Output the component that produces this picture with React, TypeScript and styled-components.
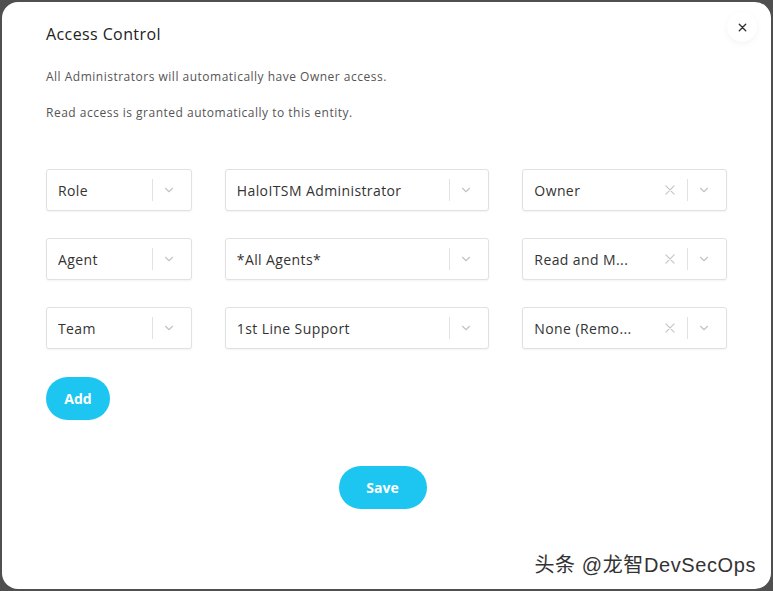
import * as React from "react";
import styled, { createGlobalStyle } from "styled-components";

const GlobalStyle = createGlobalStyle`
  html, body {
    margin: 0;
    padding: 0;
    background: #4f4f4f;
  }
  body {
    font-family: "Open Sans", "Noto Sans", sans-serif;
  }
`;

/* A row of the permission grid: entity type, entity, access level */
interface IRule {
  type: string;
  entity: string;
  access: string;
}

const rules: IRule[] = [
  { type: "Role", entity: "HaloITSM Administrator", access: "Owner" },
  { type: "Agent", entity: "*All Agents*", access: "Read and M..." },
  { type: "Team", entity: "1st Line Support", access: "None (Remo..." }
];

const Chevron = () => (
  <svg width="14" height="14" viewBox="0 0 24 24" fill="none" stroke="#c4c4c4" strokeWidth="2" strokeLinecap="round" strokeLinejoin="round">
    <path d="M6 9l6 6 6-6" />
  </svg>
);

const Cross = ({ size = 14, color = "#c4c4c4", width = 2 }: { size?: number; color?: string; width?: number }) => (
  <svg width={size} height={size} viewBox="0 0 24 24" fill="none" stroke={color} strokeWidth={width} strokeLinecap="round">
    <path d="M5 5l14 14M19 5L5 19" />
  </svg>
);

interface ISelectProps {
  value: string;
  width: number;
  clearable?: boolean;
}

const Select: React.FC<ISelectProps> = ({ value, width, clearable }) => (
  <SelectBox $width={width}>
    <SelectValue>{value}</SelectValue>
    {clearable && (
      <IconSlot>
        <Cross />
      </IconSlot>
    )}
    <Divider />
    <IconSlot>
      <Chevron />
    </IconSlot>
  </SelectBox>
);

export default function App() {
  return (
    <>
      <GlobalStyle />
      <Dialog>
        <Header>
          <Title>Access Control</Title>
          <CloseButton>
            <Cross size={11} color="#333" width={3} />
          </CloseButton>
        </Header>
        <Note>All Administrators will automatically have Owner access.</Note>
        <Note>Read access is granted automatically to this entity.</Note>
        <Grid>
          {rules.map(rule => (
            <Row key={rule.type}>
              <Select value={rule.type} width={146} />
              <Select value={rule.entity} width={265} />
              <Select value={rule.access} width={205} clearable />
            </Row>
          ))}
        </Grid>
        <AddButton>Add</AddButton>
        <Footer>
          <SaveButton>Save</SaveButton>
        </Footer>
        <Watermark>头条 @龙智DevSecOps</Watermark>
      </Dialog>
    </>
  );
}

const Dialog = styled.div`
  position: relative;
  box-sizing: border-box;
  margin: 2px;
  height: 587px;
  background: #fff;
  border-radius: 16px;
  padding: 21px 44px 0 44px;
  display: flex;
  flex-direction: column;
`;

const Header = styled.div`
  display: flex;
  align-items: center;
  justify-content: space-between;
  height: 22px;
  margin-bottom: 24px;
`;

const Title = styled.h1`
  margin: 0;
  font-size: 16px;
  font-weight: 500;
  color: #222;
  letter-spacing: 0.4px;
`;

const CloseButton = styled.button`
  margin-right: -30px;
  margin-top: -14px;
  width: 30px;
  height: 30px;
  border: none;
  border-radius: 50%;
  background: #fff;
  box-shadow: 0 2px 6px rgba(0, 0, 0, 0.05);
  display: flex;
  align-items: center;
  justify-content: center;
  padding: 0;
`;

const Note = styled.p`
  margin: 0 0 20px 0;
  font-size: 12px;
  line-height: 16px;
  color: #555;
  letter-spacing: 0.5px;
`;

const Grid = styled.div`
  margin-top: 28px;
  display: flex;
  flex-direction: column;
  gap: 27px;
`;

const Row = styled.div`
  display: flex;
  gap: 33px;
`;

const SelectBox = styled.div<{ $width: number }>`
  box-sizing: border-box;
  width: ${p => p.$width}px;
  height: 42px;
  border: 1px solid #e1e1e1;
  border-radius: 3px;
  box-shadow: 0 1px 2px rgba(0, 0, 0, 0.05);
  display: flex;
  align-items: center;
  padding: 0 12px 0 11px;
  background: #fff;
`;

const SelectValue = styled.span`
  flex: 1;
  font-size: 14px;
  letter-spacing: 0.4px;
  color: #333;
  white-space: nowrap;
  overflow: hidden;
`;

const IconSlot = styled.span`
  display: flex;
  align-items: center;
  justify-content: center;
  width: 20px;
`;

const Divider = styled.span`
  width: 1px;
  height: 22px;
  background: #e2e2e2;
  margin: 0 6px 0 7px;
`;

const PillButton = styled.button`
  border: none;
  background: #1cc6f1;
  color: #fff;
  font-family: inherit;
  font-weight: 700;
  font-size: 14px;
  height: 43px;
  border-radius: 22px;
  padding: 0;
`;

const AddButton = styled(PillButton)`
  margin-top: 28px;
  width: 64px;
  align-self: flex-start;
`;

const Footer = styled.div`
  display: flex;
  justify-content: center;
  margin-top: 46px;
`;

const SaveButton = styled(PillButton)`
  width: 88px;
  margin-left: -8px;
`;

const Watermark = styled.div`
  position: absolute;
  right: 15px;
  bottom: 11px;
  font-family: "Liberation Sans", "Noto Sans CJK SC", sans-serif;
  font-size: 20px;
  letter-spacing: 0.6px;
  color: #333;
  text-shadow: 0 0 2px #fff, 0 0 2px #fff;
`;
